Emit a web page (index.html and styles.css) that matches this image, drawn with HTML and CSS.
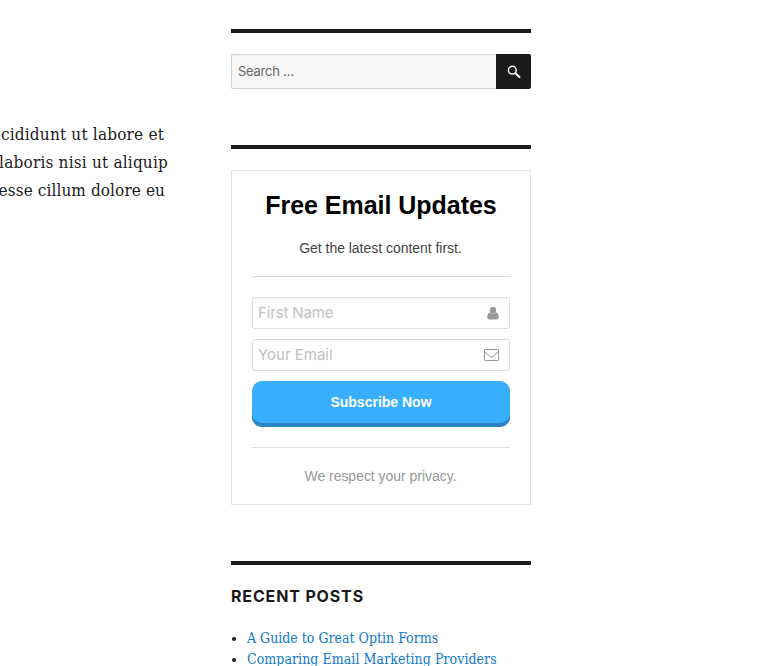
FILE: index.html
```html
<!DOCTYPE html>
<html lang="en">
<head>
<meta charset="utf-8">
<title>Blog</title>
<link rel="stylesheet" href="styles.css">
</head>
<body>
<div class="page">
  <main class="entry">
    <p class="line line-1">ncididunt ut labore et</p>
    <p class="line line-2">laboris nisi ut aliquip</p>
    <p class="line line-3">esse cillum dolore eu</p>
  </main>
  <aside class="sidebar">
    <section class="widget">
      <form class="search">
        <input class="search-field" type="search" placeholder="Search …" aria-label="Search">
        <button class="search-button" type="button" aria-label="Search">
          <svg width="14" height="14" viewBox="0 0 14 14" fill="none" stroke="#fff"><circle cx="5.3" cy="5.2" r="3.9" stroke-width="1.5"/><path d="M8.2 8 13 12.6" stroke-width="2"/></svg>
        </button>
      </form>
    </section>
    <section class="widget">
      <form class="optin">
        <h2 class="optin-title">Free Email Updates</h2>
        <p class="optin-text">Get the latest content first.</p>
        <div class="fields">
          <label class="field"><input type="text" placeholder="First Name">
            <svg width="12" height="13" viewBox="0 0 12 13" fill="#999"><circle cx="6" cy="3.3" r="3.2"/><path d="M3 5.500C1 5.600.3 7.600.3 10.200.3 11.600 1.100 12.400 2.400 12.400H9.600C10.900 12.400 11.700 11.600 11.700 10.200 11.700 7.600 11 5.600 9 5.500 7.400 7 4.600 7 3 5.500Z"/></svg>
          </label>
          <label class="field"><input type="email" placeholder="Your Email">
            <svg width="15" height="12" viewBox="0 0 15 12" fill="none" stroke="#999"><rect x=".5" y=".5" width="14" height="11" rx=".6"/><path d="M.8 3 5.800 7.300Q7.500 8.700 9.200 7.300L14.200 3"/></svg>
          </label>
          <button class="subscribe" type="button">Subscribe Now</button>
        </div>
        <p class="privacy">We respect your privacy.</p>
      </form>
    </section>
    <section class="widget">
      <h2 class="widget-title">Recent Posts</h2>
      <ul class="posts">
        <li><a>A Guide to Great Optin Forms</a></li>
        <li><a class="post-wide">Comparing Email Marketing Providers</a></li>
      </ul>
    </section>
  </aside>
</div>
</body>
</html>
```
FILE: styles.css
```css
* { box-sizing: border-box; }
html, body { height: 100%; }
body { margin: 0; overflow: hidden; background: #fff; color: #1a1a1a; }
p, h2, ul { margin: 0; padding: 0; }
input, button { font: inherit; outline: 0; }
svg { display: block; }

.page { display: flex; align-items: flex-start; height: 666px; overflow: hidden; }
.entry {
  display: flex; flex-direction: column; align-items: flex-end; flex: none;
  width: 168px; margin-right: 63px; padding-top: 120px;
  font: 17px/28px "DejaVu Serif Condensed", "DejaVu Serif", serif;
}
.line { white-space: nowrap; letter-spacing: .2px; }
.line-1 { margin-right: 4px; letter-spacing: .2px; }
.line-3 { margin-right: 3px; letter-spacing: .1px; }

.sidebar { width: 300px; flex: none; padding-top: 29px; }
.widget { border-top: 4px solid #1a1a1a; padding-top: 21px; margin-bottom: 56px; }

.search { display: flex; height: 35px; }
.search-field {
  flex: 1; min-width: 0; padding: 0 6px 1px; border: 1px solid #d1d1d1; border-right: 0;
  border-radius: 2px 0 0 2px; background: #f7f7f7;
  font: 13px/20px Inter, sans-serif; letter-spacing: -.25px; appearance: none;
}
.search-field::placeholder { color: #686868; opacity: 1; }
.search-button {
  display: flex; align-items: center; justify-content: center;
  width: 35px; padding: 0; border: 0; border-radius: 0 2px 2px 0; background: #1a1a1a;
}

.optin {
  height: 335px; padding: 18px 20px 0; border: 1px solid #e4e4e4; text-align: center;
  font: 14px/20px "Liberation Sans", Arial, sans-serif;
}
.optin-title { font-size: 25px; line-height: 32px; color: #000; letter-spacing: -.03px; }
.optin-text { margin: 17px 1px 0 0; color: #444; letter-spacing: -.03px; }
.fields {
  display: flex; flex-direction: column; gap: 10px; margin-top: 18px; padding: 20px 0;
  border: solid #ddd; border-width: 1px 0;
}
.field {
  display: flex; align-items: center; height: 32px; padding: 0 10px 0 5px;
  border: 1px solid #ddd; border-radius: 3px;
}
.field input {
  flex: 1; min-width: 0; padding: 0; border: 0; background: none;
  font: 15px/20px Inter, sans-serif; letter-spacing: -.15px;
}
.field input[type="email"] { letter-spacing: 0; }
.field input::placeholder { color: #c1c1c1; opacity: 1; }
.subscribe {
  height: 46px; padding: 0 0 4px; border: 0; border-radius: 10px;
  background: #38aeff; box-shadow: inset 0 -4px #2c85c2;
  color: #fff; font-weight: bold;
}
.privacy { margin: 18px 1px 0 0; color: #999; letter-spacing: -.03px; }

.widget-title {
  font: bold 16px/20px Inter, sans-serif; letter-spacing: .85px; text-transform: uppercase;
}
.posts {
  margin-top: 22px; padding-left: 16px;
  font: 14px/21px "DejaVu Serif Condensed", "DejaVu Serif", serif;
}
.posts li { white-space: nowrap; }
.posts a { color: #0f78cb; }
.post-wide { letter-spacing: .06px; }
```
